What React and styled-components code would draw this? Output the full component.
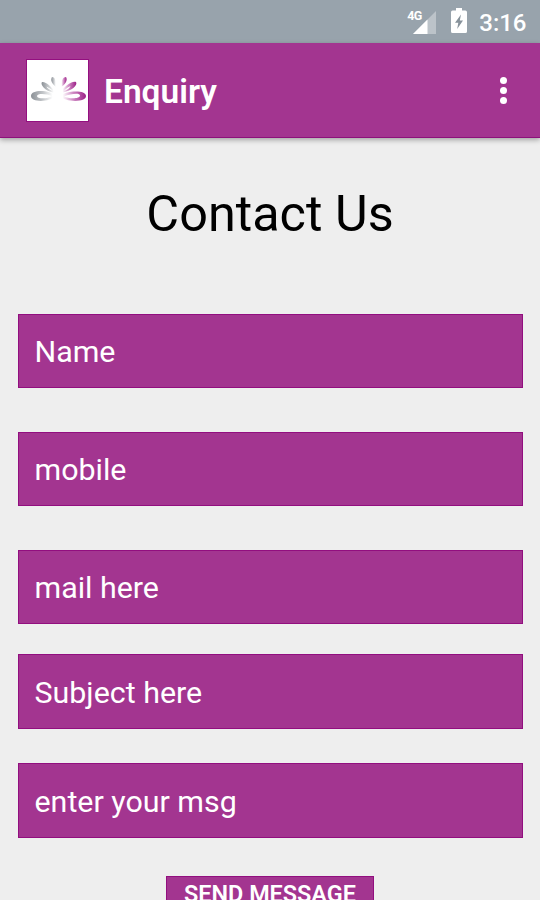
import { useState } from "react";
import styled, { createGlobalStyle } from "styled-components";

const fields = [
  { name: "name", placeholder: "Name", gap: 0 },
  { name: "mobile", placeholder: "mobile", gap: 43.5 },
  { name: "mail", placeholder: "mail here", gap: 43.5 },
  { name: "subject", placeholder: "Subject here", gap: 30 },
  { name: "message", placeholder: "enter your msg", gap: 34.5 },
];

const Signal = () => (
  <svg width="32" height="28" viewBox="0 0 32 28">
    <path d="M29 3V26H6Z" fill="#fff" fillOpacity="0.35" />
    <path d="M20.5 11.5V26H6Z" fill="#fff" />
    <path d="M0 0H15V14H0Z" fill="#98a3ac" />
    <SignalText x="0.3" y="12">
      4G
    </SignalText>
  </svg>
);

const Battery = () => (
  <svg width="16" height="25" viewBox="0 0 16 25">
    <path
      d="M5 0H11V2.6H14.4Q16 2.6 16 4.2V23.4Q16 25 14.4 25H1.6Q0 25 0 23.4V4.2Q0 2.6 1.6 2.6H5Z"
      fill="#fff"
    />
    <path d="M10 6.5L4 14.8H7.3L6.2 21L12 12.4H8.8Z" fill="#87929b" />
  </svg>
);

const Lotus = () => (
  <svg width="61" height="61" viewBox="0 0 61 61">
    <defs>
      <linearGradient id="grey" x1="0" x2="1">
        <stop offset="0" stopColor="#8b9096" />
        <stop offset="0.5" stopColor="#c3c6c9" />
        <stop offset="0.9" stopColor="#fff" />
      </linearGradient>
      <linearGradient id="pink" x1="1" x2="0">
        <stop offset="0" stopColor="#9c2087" />
        <stop offset="0.5" stopColor="#cf8bc4" />
        <stop offset="0.9" stopColor="#fff" />
      </linearGradient>
    </defs>
    <g fill="url(#grey)">
      <path
        fillRule="evenodd"
        d="M28 36C24 30 4 29 4 36C4 43 24 42 28 36ZM25 36C21 39 10 39.2 10 36C10 33 20 33.5 25 36Z"
      />
      <path
        fillRule="evenodd"
        d="M28 33C26 27 18 21 15 22C13 24 17 31 28 33ZM26 31C22 29.5 20 28 19.5 26.5C21 27 24 29 26 31Z"
      />
      <path d="M29 27C30 22 28 17 25 17C23 20 25 24 29 27Z" />
    </g>
    <g fill="url(#pink)">
      <path
        fillRule="evenodd"
        d="M33 36C37 31 59 29 59 36C59 43 37 42 33 36ZM37 36.5C42 39 53 39 53 35.5C53 32.5 43 34 37 36.5Z"
      />
      <path
        fillRule="evenodd"
        d="M34 33C35 27 46 20 49 22C51 25 45 31 34 33ZM37 31C40 30 43 28 43.5 26C42 26.5 39 28.5 37 31Z"
      />
      <path d="M34 27C33 22 36 17 39 17C41 20 38 25 34 27Z" />
    </g>
  </svg>
);

const App = () => {
  const [values, setValues] = useState({});

  const handleChange = (e) => {
    setValues({ ...values, [e.target.name]: e.target.value });
  };

  return (
    <Screen>
      <GlobalStyle />
      <StatusBar>
        <Signal />
        <Battery />
        <Clock>3:16</Clock>
      </StatusBar>
      <Toolbar>
        <Logo>
          <Lotus />
        </Logo>
        <Title>Enquiry</Title>
        <MenuButton aria-label="More options">
          <Dot />
          <Dot />
          <Dot />
        </MenuButton>
      </Toolbar>
      <Form onSubmit={(e) => e.preventDefault()}>
        <Heading>Contact Us</Heading>
        {fields.map((field) => (
          <Input
            key={field.name}
            name={field.name}
            placeholder={field.placeholder}
            value={values[field.name] || ""}
            onChange={handleChange}
            $gap={field.gap}
          />
        ))}
        <SendButton type="submit">SEND MESSAGE</SendButton>
      </Form>
    </Screen>
  );
};

const GlobalStyle = createGlobalStyle`
  * {
    box-sizing: border-box;
  }

  body {
    margin: 0;
    font-family: Roboto, sans-serif;
    background: #eeeeee;
  }
`;

const Screen = styled.div`
  width: 540px;
  height: 900px;
  display: flex;
  flex-direction: column;
  overflow: hidden;
  background: #eeeeee;
`;

const StatusBar = styled.div`
  height: 43px;
  flex-shrink: 0;
  display: flex;
  align-items: flex-start;
  justify-content: flex-end;
  padding: 8px 13.5px 0 0;
  background: #98a3ac;

  svg + svg {
    margin-left: 12px;
  }
`;

const SignalText = styled.text`
  font-size: 12.5px;
  font-weight: 700;
  letter-spacing: -0.8px;
  fill: #fff;
`;

const Clock = styled.span`
  margin-left: 12px;
  font-size: 24px;
  font-weight: 500;
  line-height: 30px;
  color: #fff;
`;

const Toolbar = styled.header`
  height: 94.5px;
  flex-shrink: 0;
  display: flex;
  align-items: center;
  padding: 2px 33px 0 27px;
  background: #a33590;
  border-bottom: 1px solid #8d117b;
  box-shadow: 0 2px 5px rgba(0, 0, 0, 0.32);
`;

const Logo = styled.div`
  width: 61px;
  height: 61px;
  background: #fff;
  box-shadow: 0 0 0 1px #940f80;
`;

const Title = styled.h1`
  margin: 2px 0 0 16px;
  font-size: 33.5px;
  font-weight: 600;
  line-height: 40px;
  color: #fff;
`;

const MenuButton = styled.button`
  display: flex;
  flex-direction: column;
  gap: 3px;
  margin-left: auto;
  padding: 0;
  background: none;
  border: none;
`;

const Dot = styled.span`
  width: 7px;
  height: 7px;
  border-radius: 50%;
  background: #fff;
`;

const Form = styled.form`
  flex: 1;
  display: flex;
  flex-direction: column;
  align-items: center;
  padding: 46px 17.5px 0;
`;

const Heading = styled.h2`
  margin: 0 0 70px;
  font-size: 50.4px;
  font-weight: 400;
  line-height: 60px;
  color: #000;
`;

const Input = styled.input`
  width: 100%;
  height: 74.5px;
  flex-shrink: 0;
  margin-top: ${(props) => props.$gap}px;
  padding: 2px 16px 0;
  font-family: inherit;
  font-size: 30.4px;
  color: #fff;
  background: #a33590;
  border: 1px solid #920e7f;
  border-radius: 0;
  outline: none;

  &::placeholder {
    color: #fff;
    opacity: 1;
  }
`;

const SendButton = styled.button`
  width: 208px;
  height: 75px;
  flex-shrink: 0;
  margin-top: 38px;
  padding: 3px 0 0;
  display: flex;
  align-items: flex-start;
  justify-content: center;
  font-family: inherit;
  font-size: 23.4px;
  font-weight: 600;
  line-height: 28px;
  color: #fff;
  background: #a33590;
  border: 1px solid #920e7f;
`;

export default App;
